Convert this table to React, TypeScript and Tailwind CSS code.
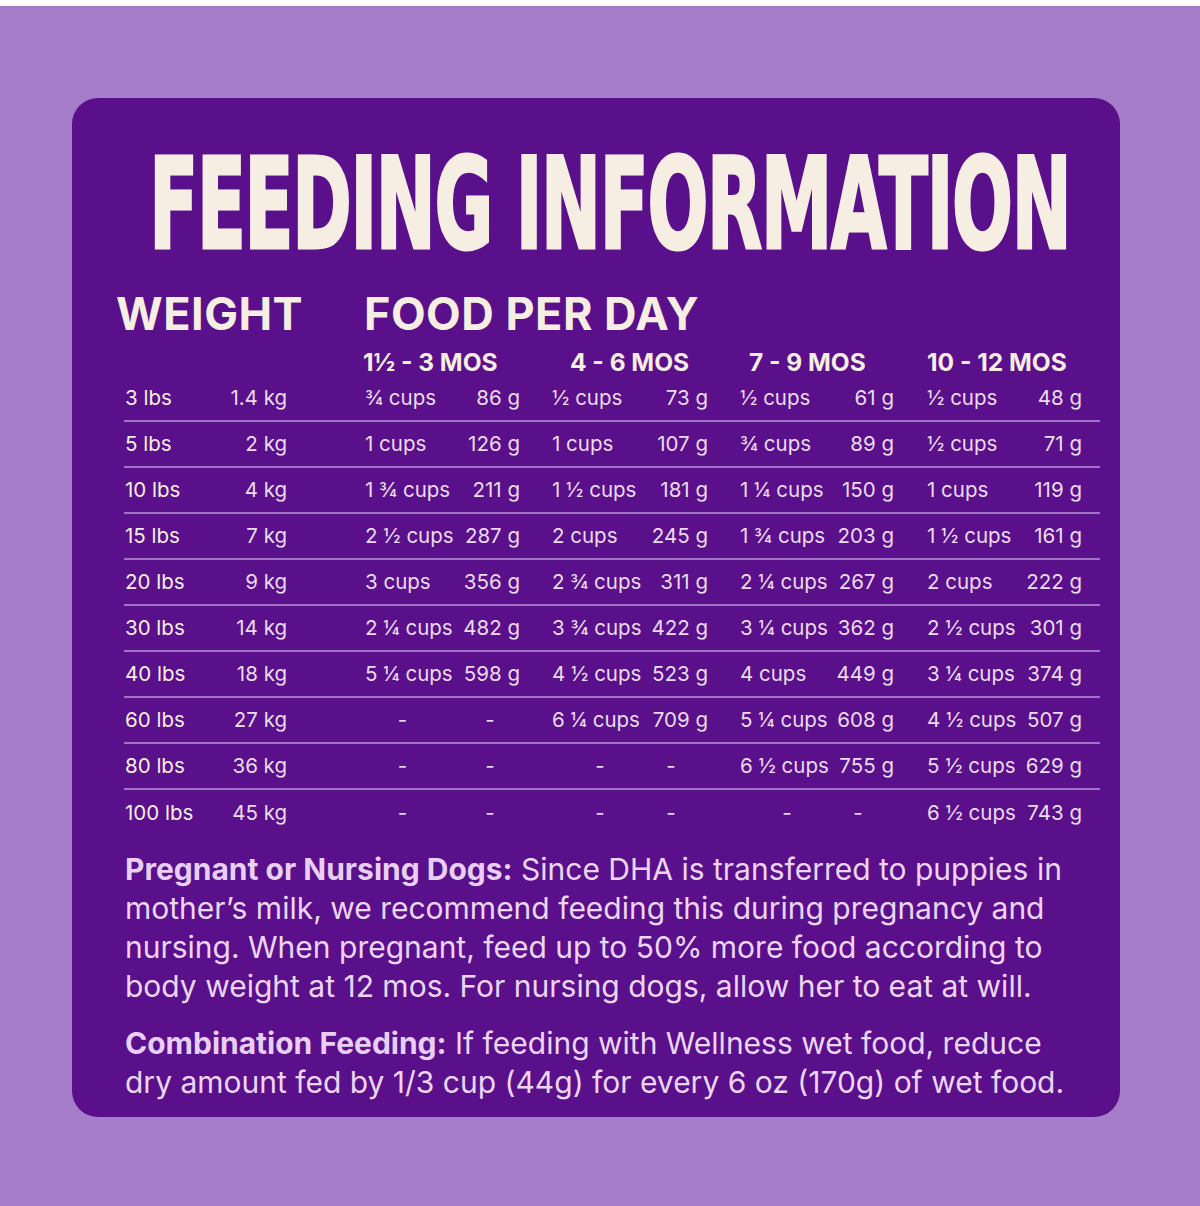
import React from "react";

type Cell = [string, string];

const rows: { lbs: string; kg: string; cols: Cell[] }[] = [
  { lbs: "3 lbs", kg: "1.4 kg", cols: [["¾ cups", "86 g"], ["½ cups", "73 g"], ["½ cups", "61 g"], ["½ cups", "48 g"]] },
  { lbs: "5 lbs", kg: "2 kg", cols: [["1 cups", "126 g"], ["1 cups", "107 g"], ["¾ cups", "89 g"], ["½ cups", "71 g"]] },
  { lbs: "10 lbs", kg: "4 kg", cols: [["1 ¾ cups", "211 g"], ["1 ½ cups", "181 g"], ["1 ¼ cups", "150 g"], ["1 cups", "119 g"]] },
  { lbs: "15 lbs", kg: "7 kg", cols: [["2 ½ cups", "287 g"], ["2 cups", "245 g"], ["1 ¾ cups", "203 g"], ["1 ½ cups", "161 g"]] },
  { lbs: "20 lbs", kg: "9 kg", cols: [["3 cups", "356 g"], ["2 ¾ cups", "311 g"], ["2 ¼ cups", "267 g"], ["2 cups", "222 g"]] },
  { lbs: "30 lbs", kg: "14 kg", cols: [["2 ¼ cups", "482 g"], ["3 ¾ cups", "422 g"], ["3 ¼ cups", "362 g"], ["2 ½ cups", "301 g"]] },
  { lbs: "40 lbs", kg: "18 kg", cols: [["5 ¼ cups", "598 g"], ["4 ½ cups", "523 g"], ["4 cups", "449 g"], ["3 ¼ cups", "374 g"]] },
  { lbs: "60 lbs", kg: "27 kg", cols: [["-", "-"], ["6 ¼ cups", "709 g"], ["5 ¼ cups", "608 g"], ["4 ½ cups", "507 g"]] },
  { lbs: "80 lbs", kg: "36 kg", cols: [["-", "-"], ["-", "-"], ["6 ½ cups", "755 g"], ["5 ½ cups", "629 g"]] },
  { lbs: "100 lbs", kg: "45 kg", cols: [["-", "-"], ["-", "-"], ["-", "-"], ["6 ½ cups", "743 g"]] },
];

const grid = "grid grid-cols-[100px_63px_78px_95px_60px_32px_96px_60px_32px_94px_60px_33px_95px_60px_18px]";

function Cups({ v, dashPad }: { v: string; dashPad: string }) {
  if (v === "-") return <div className={`text-center ${dashPad}`}>-</div>;
  return <div className="whitespace-nowrap">{v}</div>;
}

function Grams({ v, dashPad }: { v: string; dashPad: string }) {
  if (v === "-") return <div className={`text-center ${dashPad}`}>-</div>;
  return <div className="text-right whitespace-nowrap">{v}</div>;
}

const cupPads = ["pr-[20px]", "", "", ""];
const gPads = ["", "pr-[14px]", "pr-[12px]", ""];

export default function App() {
  return (
    <div className="min-h-[1206px] w-[1200px] bg-[#a67dc8] border-t-[6px] border-white font-['Inter',sans-serif]">
      <div className="pt-[92px] pl-[72px]">
        <div className="w-[1048px] bg-[#5a108a] rounded-[26px] pl-[52px] pr-[20px] pt-[44px] pb-[15px]">
          <h1 className="flex justify-center pr-[4px] text-[#f6eee2] leading-none h-[128px] whitespace-nowrap">
            <span className="inline-block shrink-0 origin-center scale-x-[0.632] text-[126px] font-bold tracking-[-2px] font-['DejaVu_Sans_Condensed',sans-serif] [-webkit-text-stroke:3px_#f6eee2]">
              FEEDING INFORMATION
            </span>
          </h1>

          <div className="flex mt-[18px] text-[#f6eee2] font-bold text-[45px] leading-[52px] tracking-[0.5px]">
            <div className="w-[248px] -ml-[8px]">WEIGHT</div>
            <div>FOOD PER DAY</div>
          </div>

          <div className={`${grid} mt-[8px] h-[28px] items-center text-[#f6eee2] font-bold text-[24.5px] leading-[28px]`}>
            <div className="col-start-4 col-span-2 -ml-[2px] whitespace-nowrap">1½ - 3 MOS</div>
            <div className="col-start-7 col-span-2 pl-[18px] whitespace-nowrap">4 - 6 MOS</div>
            <div className="col-start-10 col-span-2 pl-[9px] whitespace-nowrap">7 - 9 MOS</div>
            <div className="col-start-13 col-span-2 whitespace-nowrap">10 - 12 MOS</div>
          </div>

          <div className="text-[20.5px] leading-[24px] text-[#eadcf0]">
            {rows.map((r, i) => (
              <div
                key={r.lbs}
                className={`${grid} items-center h-[46px] ${
                  i < rows.length - 1 ? "border-b-2 border-[#9f73c6]" : ""
                }`}
              >
                <div className="text-[#f6eee2] pl-[1px]">{r.lbs}</div>
                <div className="text-right">{r.kg}</div>
                <div />
                {r.cols.map((c, j) => (
                  <React.Fragment key={j}>
                    <Cups v={c[0]} dashPad={cupPads[j]} />
                    <Grams v={c[1]} dashPad={gPads[j]} />
                    <div />
                  </React.Fragment>
                ))}
              </div>
            ))}
          </div>

          <div className="mt-[14px] pl-[1px] pr-[20px] text-[30px] leading-[39px] text-[#ecd6f6]">
            <p>
              <span className="font-bold text-[#e8cff6]">Pregnant or Nursing Dogs:</span> Since DHA is
              transferred to puppies in mother’s milk, we recommend feeding this during pregnancy and nursing. When
              pregnant, feed up to 50% more food according to body weight at 12 mos. For nursing dogs, allow her to eat
              at will.
            </p>
            <p className="mt-[18px]">
              <span className="font-bold text-[#e8cff6]">Combination Feeding:</span> If feeding with Wellness wet food,
              reduce dry amount fed by 1/3 cup (44g) for every 6 oz (170g) of wet food.
            </p>
          </div>
        </div>
      </div>
    </div>
  );
}
